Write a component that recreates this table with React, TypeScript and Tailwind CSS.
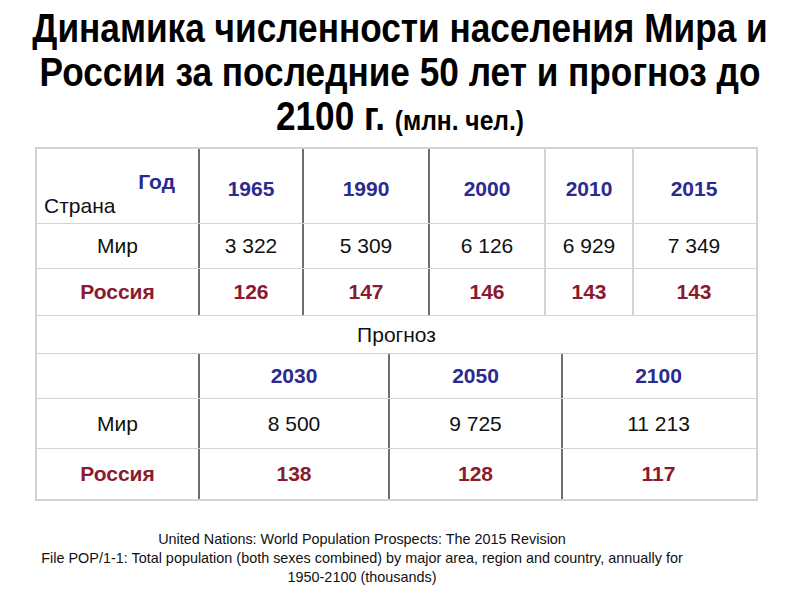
const blue = "text-[#2b2b8f]";
const red = "text-[#8b1a2e]";

const top = [
  { w: "w-[104px]", year: "1965", world: "3 322", ru: "126", line: "border-[#6f6f6f]" },
  { w: "w-[126px]", year: "1990", world: "5 309", ru: "147", line: "border-[#6f6f6f]" },
  { w: "w-[116px]", year: "2000", world: "6 126", ru: "146", line: "border-[#d4d4d4]" },
  { w: "w-[88px]", year: "2010", world: "6 929", ru: "143", line: "border-[#d4d4d4]" },
  { w: "flex-1", year: "2015", world: "7 349", ru: "143", line: "border-transparent" },
];

const forecast = [
  { w: "w-[190px]", year: "2030", world: "8 500", ru: "138", line: "border-[#6f6f6f]" },
  { w: "w-[173px]", year: "2050", world: "9 725", ru: "128", line: "border-[#6f6f6f]" },
  { w: "flex-1", year: "2100", world: "11 213", ru: "117", line: "border-transparent" },
];

export default function App() {
  return (
    <div className="w-[800px] h-[600px] bg-white overflow-hidden" style={{ fontFamily: '"Liberation Sans", Arial, sans-serif' }}>
      <h1 className="pt-[6px] flex flex-col items-center whitespace-nowrap text-[40px] leading-[44px] font-bold text-black scale-x-[0.88]">
        <span>Динамика численности населения Мира и</span>
        <span>России за последние 50 лет и прогноз до</span>
        <span>
          2100 г. <span className="text-[28px]">(млн. чел.)</span>
        </span>
      </h1>

      <div className="ml-[35px] mt-[4px] w-[723px] border-2 border-[#d2d2d2] text-[21px] text-[#111]">
        {/* header row */}
        <div className="flex h-[75px] border-b border-[#d4d4d4]">
          <div className="w-[163px] border-r-2 border-[#6f6f6f] flex flex-col pt-[21px] pl-[7px]">
            <span className={`self-end pr-[23px] font-bold leading-[24px] ${blue}`}>Год</span>
            <span className="leading-[24px]">Страна</span>
          </div>
          {top.map((c) => (
            <div key={c.year} className={`${c.w} border-r-2 ${c.line} flex justify-center pt-[24px] font-bold ${blue}`}>
              {c.year}
            </div>
          ))}
        </div>
        <div className="flex h-[45px] border-b border-[#d4d4d4]">
          <div className="w-[163px] border-r-2 border-[#6f6f6f] flex items-center justify-center">Мир</div>
          {top.map((c) => (
            <div key={c.year} className={`${c.w} border-r-2 ${c.line} flex items-center justify-center`}>
              {c.world}
            </div>
          ))}
        </div>
        <div className={`flex h-[47px] border-b border-[#d4d4d4] font-bold ${red}`}>
          <div className="w-[163px] border-r-2 border-[#6f6f6f] flex items-center justify-center">Россия</div>
          {top.map((c) => (
            <div key={c.year} className={`${c.w} border-r-2 ${c.line} flex items-center justify-center`}>
              {c.ru}
            </div>
          ))}
        </div>

        <div className="h-[38px] border-b border-[#d4d4d4] flex items-center justify-center">Прогноз</div>

        {/* forecast */}
        <div className="flex h-[45px] border-b border-[#d4d4d4]">
          <div className="w-[163px] border-r-2 border-[#6f6f6f]" />
          {forecast.map((c) => (
            <div key={c.year} className={`${c.w} border-r-2 ${c.line} flex items-center justify-center font-bold ${blue}`}>
              {c.year}
            </div>
          ))}
        </div>
        <div className="flex h-[50px] border-b border-[#d4d4d4]">
          <div className="w-[163px] border-r-2 border-[#6f6f6f] flex items-center justify-center">Мир</div>
          {forecast.map((c) => (
            <div key={c.year} className={`${c.w} border-r-2 ${c.line} flex items-center justify-center`}>
              {c.world}
            </div>
          ))}
        </div>
        <div className={`flex h-[50px] font-bold ${red}`}>
          <div className="w-[163px] border-r-2 border-[#6f6f6f] flex items-center justify-center">Россия</div>
          {forecast.map((c) => (
            <div key={c.year} className={`${c.w} border-r-2 ${c.line} flex items-center justify-center`}>
              {c.ru}
            </div>
          ))}
        </div>
      </div>

      <div className="w-[724px] mt-[28px] text-center whitespace-nowrap text-[15px] leading-[19px] text-[#111] scale-x-[0.96]">
        <p>United Nations: World Population Prospects: The 2015 Revision</p>
        <p>File POP/1-1: Total population (both sexes combined) by major area, region and country, annually for</p>
        <p>1950-2100 (thousands)</p>
      </div>
    </div>
  );
}
